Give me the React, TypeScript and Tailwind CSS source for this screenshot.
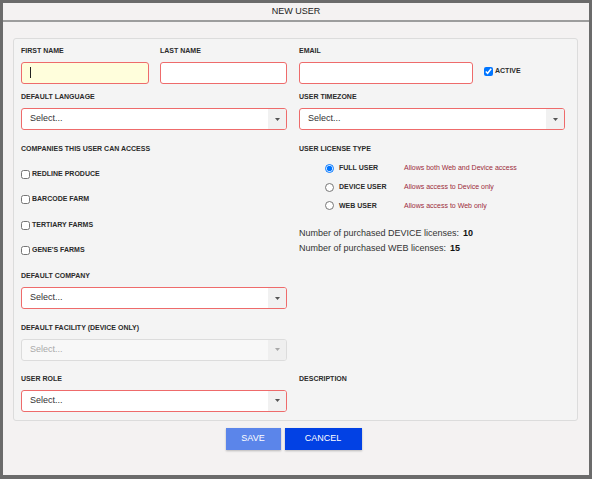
import React from "react";

const FONT = { fontFamily: "'Liberation Sans', Arial, sans-serif" };

function Label({ children }: { children: React.ReactNode }) {
  return <div className="h-[10px] leading-[10px] text-[7px] font-bold uppercase text-[#2b2b2b] whitespace-nowrap">{children}</div>;
}

function Caret({ disabled }: { disabled?: boolean }) {
  return (
    <svg width="5" height="3" viewBox="0 0 5 3">
      <polygon points="0,0 5,0 2.5,3" fill={disabled ? "#a8a8a8" : "#555"} />
    </svg>
  );
}

function Select({ disabled }: { disabled?: boolean }) {
  return (
    <div
      className={
        disabled
          ? "h-[22px] w-full flex rounded-[3px] border border-[#dcdcdc] bg-[#f8f8f8] overflow-hidden"
          : "h-[22px] w-full flex rounded-[3px] border border-[#ee6b6b] bg-white overflow-hidden"
      }
    >
      <div className={`flex-1 flex items-center pl-[8px] text-[9px] ${disabled ? "text-[#a9a9a9]" : "text-[#333]"}`}>Select...</div>
      <div className={`w-[18px] flex items-center justify-center ${disabled ? "bg-[#efefef]" : "bg-[#f1f1f1]"}`}>
        <Caret disabled={disabled} />
      </div>
    </div>
  );
}

function TextInput({ focused }: { focused?: boolean }) {
  return (
    <div className={`h-[22px] w-full flex items-center rounded-[3px] border border-[#ee6b6b] ${focused ? "bg-[#fffedc]" : "bg-white"}`}>
      {focused && <span className="ml-[8px] w-px h-[11px] bg-[#222]" />}
    </div>
  );
}

function Field({ label, children, className }: { label: string; children: React.ReactNode; className?: string }) {
  return (
    <div className={className}>
      <Label>{label}</Label>
      <div className="mt-[6px]">{children}</div>
    </div>
  );
}

const companies = ["Redline Produce", "Barcode Farm", "Tertiary Farms", "Gene's Farms"];

const licenses = [
  { name: "Full User", desc: "Allows both Web and Device access", checked: true },
  { name: "Device User", desc: "Allows access to Device only", checked: false },
  { name: "Web User", desc: "Allows access to Web only", checked: false },
];

export default function App() {
  return (
    <div className="w-[592px] h-[479px] bg-[#6b6b6b] pt-[3px] pl-[3px] overflow-hidden" style={FONT}>
      <div className="w-[586px] h-[472px] bg-[#f4f2f2] flex flex-col">
        <div className="h-[19px] border-b-2 border-[#9d9d9d] flex items-center justify-center text-[9px] text-[#222]">NEW USER</div>

        <div className="px-[10px] pt-[16px]">
          <div className="w-[565px] h-[383px] rounded-[3px] border border-[#dcdcdc] bg-[#f4f4f4] pl-[7px] pt-[6.5px]">
            {/* names / email */}
            <div className="flex gap-[12px]">
              <div className="w-[266px] flex gap-[11px]">
                <Field label="First Name" className="w-[128px]">
                  <TextInput focused />
                </Field>
                <Field label="Last Name" className="w-[127px]">
                  <TextInput />
                </Field>
              </div>
              <div className="flex">
                <Field label="Email" className="w-[174px]">
                  <TextInput />
                </Field>
                <div className="mt-[16px] h-[22px] ml-[11px] flex items-center gap-[2px] pb-[2px]">
                  <input type="checkbox" defaultChecked className="m-0 w-[9px] h-[9px] accent-[#0075ff]" />
                  <span className="text-[7px] font-bold text-[#2b2b2b]">ACTIVE</span>
                </div>
              </div>
            </div>

            {/* language / timezone */}
            <div className="flex gap-[12px] mt-[8.5px]">
              <Field label="Default Language" className="w-[266px]">
                <Select />
              </Field>
              <Field label="User Timezone" className="w-[266px]">
                <Select />
              </Field>
            </div>

            <div className="flex gap-[12px] mt-[13.5px]">
              <div className="w-[266px]">
                <div className="flex flex-col gap-[15.5px]">
                  <Label>Companies this user can access</Label>
                  {companies.map(c => (
                    <div key={c} className="h-[10px] flex items-center gap-[2px]">
                      <input type="checkbox" className="m-0 w-[9px] h-[9px]" />
                      <span className="text-[7px] font-bold uppercase text-[#2b2b2b]">{c}</span>
                    </div>
                  ))}
                </div>
                <Field label="Default Company" className="mt-[15.5px]">
                  <Select />
                </Field>
                <Field label="Default Facility (Device Only)" className="mt-[13.5px]">
                  <Select disabled />
                </Field>
              </div>

              <div className="w-[266px]">
                <Label>User License Type</Label>
                <div className="mt-[9px] flex flex-col gap-[6.7px] pl-[26px]">
                  {licenses.map(l => (
                    <div key={l.name} className="h-[12px] flex items-center">
                      <input type="radio" name="lic" defaultChecked={l.checked} className="m-0 w-[9px] h-[9px] accent-[#0075ff]" />
                      <span className="ml-[5px] w-[65px] text-[7px] font-bold uppercase text-[#2b2b2b]">{l.name}</span>
                      <span className="text-[7px] text-[#9c2b3a]">{l.desc}</span>
                    </div>
                  ))}
                </div>
                <div className="mt-[14.5px] text-[9px] leading-[14.7px] text-[#333]">
                  <div>
                    Number of purchased DEVICE licenses:<b className="ml-[4px] text-[#111]">10</b>
                  </div>
                  <div>
                    Number of purchased WEB licenses:<b className="ml-[4px] text-[#111]">15</b>
                  </div>
                </div>
              </div>
            </div>

            <div className="flex gap-[12px] mt-[13px]">
              <Field label="User Role" className="w-[266px]">
                <Select />
              </Field>
              <div className="w-[266px]">
                <Label>Description</Label>
              </div>
            </div>
          </div>
        </div>

        <div className="mt-[7px] flex justify-center gap-[4px] pr-[5px]">
          <button className="w-[55px] h-[22px] bg-[#5b85ea] text-white text-[9px] shadow-[0_1px_2px_rgba(0,0,0,0.25)]">SAVE</button>
          <button className="w-[77px] h-[22px] bg-[#0241e4] text-white text-[9px] shadow-[0_1px_2px_rgba(0,0,0,0.25)]">CANCEL</button>
        </div>
      </div>
    </div>
  );
}
